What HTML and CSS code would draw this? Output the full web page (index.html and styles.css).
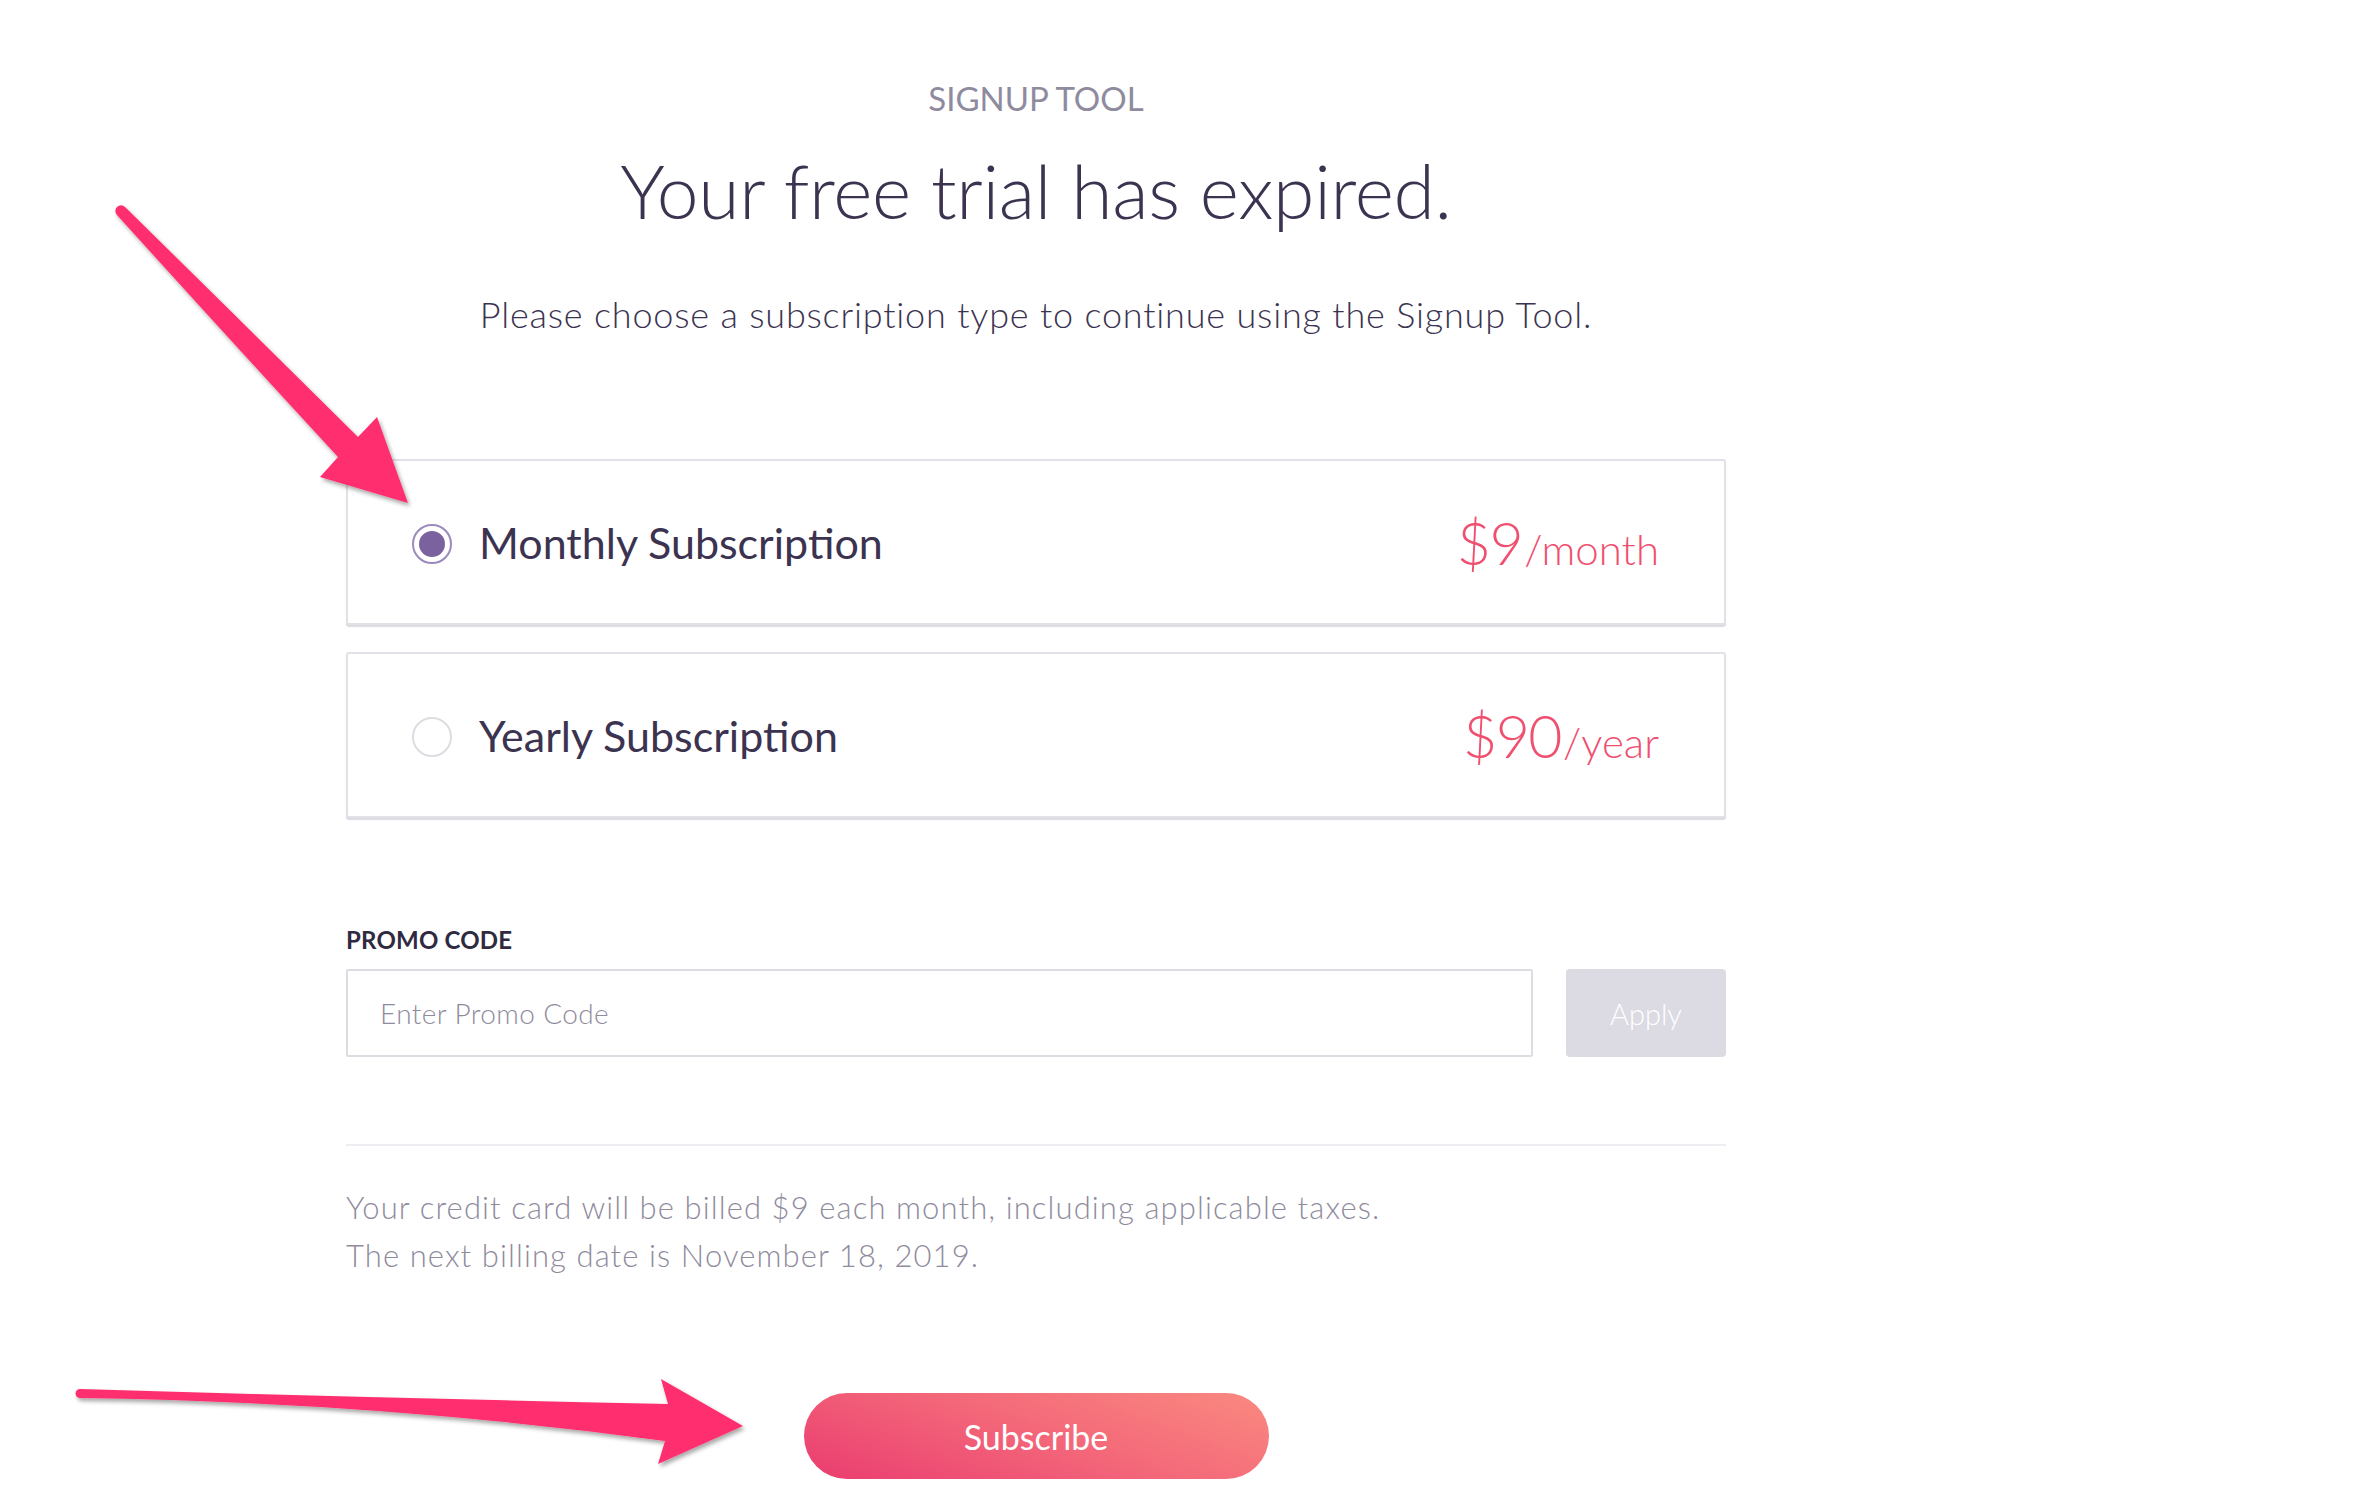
FILE: index.html
```html
<!DOCTYPE html>
<html lang="en">
<head>
<meta charset="utf-8">
<title>Signup Tool – Subscription</title>
<link rel="stylesheet" href="styles.css">
</head>
<body>
<main class="page">
  <p class="eyebrow">SIGNUP TOOL</p>
  <h1 class="title">Your free trial has expired.</h1>
  <p class="subtitle">Please choose a subscription type to continue using the Signup Tool.</p>

  <div class="plans">
    <label class="plan">
      <span class="radio radio-on"><span class="dot"></span></span>
      <span class="plan-name">Monthly Subscription</span>
      <span class="price"><span class="amount">$9</span><span class="per">/month</span></span>
    </label>
    <label class="plan">
      <span class="radio"></span>
      <span class="plan-name">Yearly Subscription</span>
      <span class="price"><span class="amount">$90</span><span class="per">/year</span></span>
    </label>
  </div>

  <div class="promo">
    <div class="promo-label">PROMO CODE</div>
    <div class="promo-row">
      <input class="promo-input" type="text" placeholder="Enter Promo Code">
      <button class="apply" type="button">Apply</button>
    </div>
  </div>

  <hr class="divider">

  <p class="billing">Your credit card will be billed $9 each month, including applicable taxes.<br>The next billing date is November 18, 2019.</p>

  <div class="actions">
    <button class="subscribe" type="button">Subscribe</button>
  </div>
</main>

<svg class="annotations" width="2356" height="1500" viewBox="0 0 2356 1500" aria-hidden="true">
  <defs>
    <filter id="shadow" x="-10%" y="-10%" width="130%" height="130%">
      <feDropShadow dx="2" dy="3" stdDeviation="2" flood-color="#000" flood-opacity="0.35"/>
    </filter>
  </defs>
  <path class="arrow" filter="url(#shadow)" d="M 125 207 Q 240 320 358 437 L 377 417 L 408 503 L 320 477 L 338 457 Q 230 340 117 215 A 5.6 5.6 0 0 1 125 207 Z"/>
  <path class="arrow" filter="url(#shadow)" d="M 80 1389 Q 380 1398 668 1404 L 661 1379 L 743 1426 L 658 1464 L 665 1441 Q 380 1402 80 1398 A 4.5 4.5 0 0 1 80 1389 Z"/>
</svg>
</body>
</html>
```
FILE: styles.css
```css
html, body {
  margin: 0;
  padding: 0;
  background: #ffffff;
}

body {
  font-family: Lato, "Noto Sans", sans-serif;
  color: #3b3350;
  position: relative;
  width: 2356px;
  height: 1500px;
  overflow: hidden;
}

.page {
  width: 1380px;
  margin-left: 346px;
  padding-top: 78px;
  display: flex;
  flex-direction: column;
}

.eyebrow {
  margin: 0;
  text-align: center;
  font-size: 33px;
  line-height: 40px;
  color: #8f8b9e;
}

.title {
  margin: 27px 0 0;
  text-align: center;
  font-weight: 300;
  font-size: 75px;
  line-height: 90px;
  letter-spacing: -0.3px;
  color: #3b3350;
}

.subtitle {
  margin: 57px 0 0;
  text-align: center;
  font-weight: 300;
  font-size: 36px;
  line-height: 44px;
  letter-spacing: 0.8px;
  color: #3b3350;
}

.plans {
  margin-top: 123px;
  display: flex;
  flex-direction: column;
  gap: 27px;
}

.plan {
  box-sizing: border-box;
  height: 166px;
  border: 2px solid #e2e1e7;
  border-radius: 3px;
  box-shadow: 0 2px 1px #dcdbe2;
  display: flex;
  align-items: center;
  padding: 0 65px 0 64px;
  background: #fff;
}

.radio {
  box-sizing: border-box;
  width: 40px;
  height: 40px;
  border-radius: 50%;
  border: 2px solid #dddce3;
  display: flex;
  align-items: center;
  justify-content: center;
  flex: none;
  margin-top: 3px;
}

.radio-on {
  border-color: #9c89bd;
}

.dot {
  width: 26px;
  height: 26px;
  border-radius: 50%;
  background: #7b619d;
}

.plan-name {
  margin-left: 27px;
  font-size: 43px;
  font-weight: 400;
  color: #3b3350;
  flex: 1;
}

.price {
  display: flex;
  align-items: baseline;
  color: #f0506f;
}

.amount {
  font-size: 59px;
  font-weight: 300;
  letter-spacing: -1.5px;
  margin-right: 2px;
}

.per {
  font-size: 42px;
  font-weight: 300;
}

.promo {
  margin-top: 107px;
}

.promo-label {
  font-size: 24px;
  line-height: 30px;
  font-weight: 700;
  color: #2f2a40;
  letter-spacing: 0.2px;
}

.promo-row {
  margin-top: 14px;
  display: flex;
  gap: 33px;
}

.promo-input {
  box-sizing: border-box;
  flex: 1;
  height: 88px;
  border: 2px solid #dddce3;
  border-radius: 2px;
  padding: 0 32px;
  font-family: Lato, "Noto Sans", sans-serif;
  font-weight: 300;
  font-size: 28px;
  letter-spacing: 0.4px;
  color: #3b3350;
  outline: none;
}

.promo-input::placeholder {
  color: #8f8b9c;
}

.apply {
  width: 160px;
  height: 88px;
  border: none;
  border-radius: 4px;
  background: #dcdae3;
  color: #ffffff;
  font-family: Lato, "Noto Sans", sans-serif;
  font-weight: 300;
  font-size: 29px;
}

.divider {
  margin: 87px 0 0;
  border: none;
  height: 2px;
  background: #eeedf1;
}

.billing {
  margin: 37px 0 0;
  font-weight: 300;
  font-size: 31px;
  line-height: 48px;
  letter-spacing: 1.1px;
  color: #8f8b9c;
}

.actions {
  margin-top: 114px;
  display: flex;
  justify-content: center;
}

.subscribe {
  width: 465px;
  height: 86px;
  border: none;
  border-radius: 43px;
  background: linear-gradient(20deg, #ea3c70 0%, #f46a7a 55%, #fa8a80 100%);
  color: #ffffff;
  font-family: Lato, "Noto Sans", sans-serif;
  font-size: 34px;
}

.annotations {
  position: absolute;
  left: 0;
  top: 0;
  pointer-events: none;
}

.arrow {
  fill: #ff2e6e;
}
```
